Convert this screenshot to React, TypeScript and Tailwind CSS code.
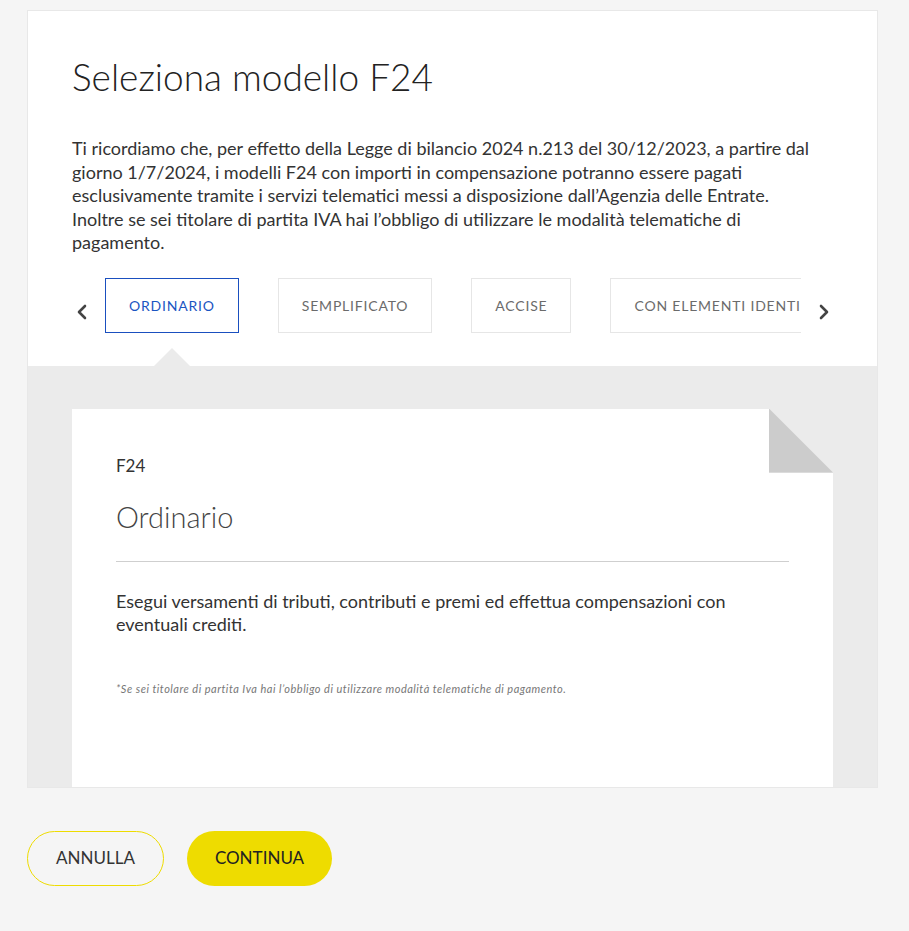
import React from 'react';

const tabs = ['ORDINARIO', 'SEMPLIFICATO', 'ACCISE', 'CON ELEMENTI IDENTIFICATIVI'];

const Chevron: React.FC<{ dir: 'left' | 'right' }> = ({ dir }) => (
  <svg width="12" height="16" viewBox="0 0 12 16" fill="none">
    <path
      d={dir === 'left' ? 'M9 2 L3 8 L9 14' : 'M3 2 L9 8 L3 14'}
      stroke="#444"
      strokeWidth="2.6"
      strokeLinecap="round"
      strokeLinejoin="round"
    />
  </svg>
);

const App: React.FC = () => {
  return (
    <div className="min-h-[931px] bg-[#f5f5f5] px-[27px] pt-[10px] pb-[45px] font-['Lato','Liberation_Sans',sans-serif] text-[#333]">
      <div className="w-[851px] border border-[#e8e8e8] bg-white">
        {/* header */}
        <div className="px-[44px] pt-[42px]">
          <h1 className="text-[37px] font-light leading-[48px] text-[#222]">Seleziona modello F24</h1>
          <p className="mt-[36px] text-[18px] leading-[23.5px] text-[#333]">
            Ti ricordiamo che, per effetto della Legge di bilancio 2024 n.213 del 30/12/2023, a partire dal
            <br />
            giorno 1/7/2024, i modelli F24 con importi in compensazione potranno essere pagati
            <br />
            esclusivamente tramite i servizi telematici messi a disposizione dall’Agenzia delle Entrate.
            <br />
            Inoltre se sei titolare di partita IVA hai l’obbligo di utilizzare le modalità telematiche di
            <br />
            pagamento.
          </p>

          {/* tabs */}
          <div className="mt-[23px] flex items-center">
            <button className="flex w-[33px] items-center justify-start pl-[4px] pt-[13px]">
              <Chevron dir="left" />
            </button>
            <div className="flex w-[696px] gap-[39px] overflow-hidden">
              {tabs.map((t, i) => (
                <div
                  key={t}
                  className={`flex h-[55px] shrink-0 items-center whitespace-nowrap border px-[23px] text-[14px] tracking-[0.8px] ${
                    i === 0 ? 'border-[#1a4fbf] text-[#1a55c2]' : 'border-[#e6e6e6] text-[#6b6b6b]'
                  }`}
                >
                  {t}
                </div>
              ))}
            </div>
            <button className="flex items-center pl-[17px] pt-[13px]">
              <Chevron dir="right" />
            </button>
          </div>
          <div className="relative h-[33px]">
            <div className="absolute bottom-0 left-[82px] h-0 w-0 border-r-[18px] border-b-[18px] border-l-[18px] border-r-transparent border-b-[#ebebeb] border-l-transparent" />
          </div>
        </div>

        {/* grey area with paper */}
        <div className="bg-[#ebebeb] px-[44px] pt-[43px]">
          <div className="relative h-[378px] bg-white px-[44px] pt-[46px]">
            <div className="absolute top-0 right-0 h-[64px] w-[64px] bg-[#ebebeb]">
              <div className="h-full w-full bg-[#cccccc] [clip-path:polygon(0_0,0_100%,100%_100%)]" />
            </div>
            <div className="text-[17px] leading-[22px] text-[#333]">F24</div>
            <h2 className="mt-[23px] text-[29px] leading-[34px] font-light text-[#444]">Ordinario</h2>
            <div className="mt-[27px] h-px bg-[#cfcfcf]" />
            <p className="mt-[28px] text-[18px] leading-[23.5px] text-[#333]">
              Esegui versamenti di tributi, contributi e premi ed effettua compensazioni con
              <br />
              eventuali crediti.
            </p>
            <p className="mt-[44px] text-[11px] italic tracking-[0.5px] text-[#777]">
              *Se sei titolare di partita Iva hai l’obbligo di utilizzare modalità telematiche di pagamento.
            </p>
          </div>
        </div>
      </div>

      {/* buttons */}
      <div className="mt-[43px] flex gap-[23px]">
        <button className="h-[55px] w-[137px] rounded-full border border-[#eedc00] text-[17px] text-[#333]">
          ANNULLA
        </button>
        <button className="h-[55px] w-[145px] rounded-full bg-[#eedc00] text-[17px] text-[#222]">
          CONTINUA
        </button>
      </div>
    </div>
  );
};

export default App;
